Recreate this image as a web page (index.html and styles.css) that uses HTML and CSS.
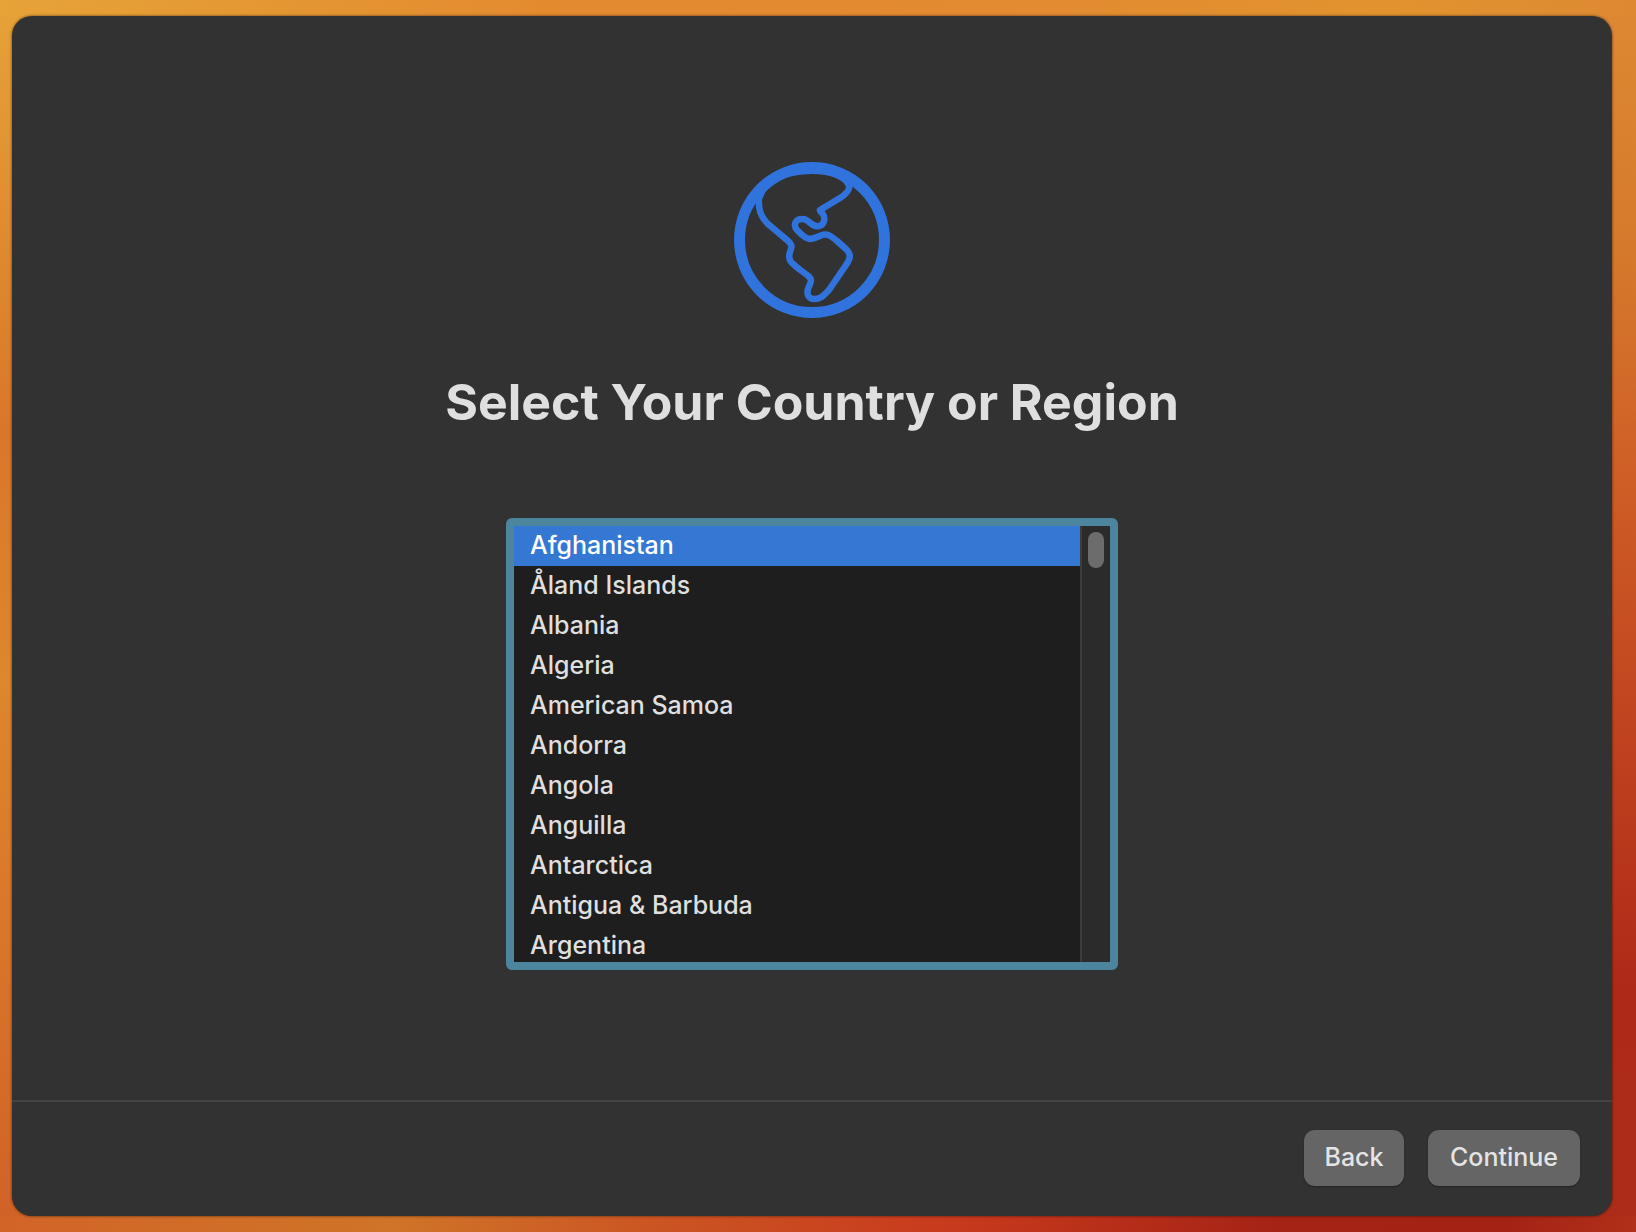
FILE: index.html
```html
<!DOCTYPE html>
<html lang="en">
<head>
<meta charset="utf-8">
<meta name="viewport" content="width=device-width, initial-scale=1">
<title>Setup Assistant</title>
<link rel="stylesheet" href="styles.css">
</head>
<body>
<form class="window">
  <main class="content">
    <svg class="globe" viewBox="0 0 156 156" fill="none" stroke="currentColor" stroke-linecap="round" stroke-linejoin="round" aria-hidden="true">
      <circle cx="78" cy="78" r="72.500" stroke-width="11"/>
      <path stroke-width="6.500" d="M25 33C24 47 26 54 34 62L53 78C60 84 57 86 56 90C53 99 59 102 65 107L73 113C80 118 76 121 74 127C72 134 76 137 80 137C87 137 90 133 95 128L112 103C117 96 117 92 112 87L103 79C97 74 93 71 88 73C83 75 80 77 76 77C70 76 67 72 63 68C59 63 61 57 68 57C75 56 77 66 85 64C92 62 91 54 88 51C84 48 86 48 91 45L106 36C114 31 117 25 115 20"/>
      <path stroke-width="6" d="M26 35C31 19 50 9 78 9C98 9 112 15 115 24"/>
    </svg>
    <h1 class="title"><label for="country">Select Your Country or Region</label></h1>
    <div class="listbox">
      <select class="countries" id="country" name="country" size="11">
        <option selected>Afghanistan</option>
        <option>Åland Islands</option>
        <option>Albania</option>
        <option>Algeria</option>
        <option>American Samoa</option>
        <option>Andorra</option>
        <option>Angola</option>
        <option>Anguilla</option>
        <option>Antarctica</option>
        <option>Antigua &amp; Barbuda</option>
        <option>Argentina</option>
      </select>
      <div class="track" aria-hidden="true"><div class="thumb"></div></div>
    </div>
  </main>
  <footer class="footer">
    <button class="button" type="button">Back</button>
    <button class="button button-wide" type="submit">Continue</button>
  </footer>
</form>
</body>
</html>
```
FILE: styles.css
```css
* {
  box-sizing: border-box;
}

body {
  margin: 0;
  min-height: 100vh;
  padding: 16px 24px 16px 12px;
  display: flex;
  font-family: Inter, "Liberation Sans", sans-serif;
  font-size: 25px;
  color: #dfdfdf;
  background:
    linear-gradient(to right, #e6a338, #e3892f 35%, #e28b31 65%, #e2932f 85%, #dd8932) top / 100% 16px no-repeat,
    linear-gradient(to right, #d26427, #cf7428 24%, #cb5523 40%, #c83a1d 58%, #a52315 78%, #a42214 92%, #b03019) bottom / 100% 16px no-repeat,
    linear-gradient(to bottom, #e6a338, #d8772a 35%, #dd872e 55%, #d8772a 75%, #d06127) left / 50% 100% no-repeat,
    linear-gradient(to bottom, #dd8932, #d57a2c 20%, #cf5f26 38%, #c0421f 60%, #ae2a18 80%, #ac2c19) right / 50% 100% no-repeat;
}

.window {
  flex: 1;
  display: flex;
  flex-direction: column;
  border-radius: 20px;
  background: #323232;
  box-shadow: 0 0 3px rgba(0, 0, 0, 0.6);
}

.content {
  flex: 1;
  display: flex;
  flex-direction: column;
  align-items: center;
  padding: 146px 24px 40px;
}

.globe {
  width: 156px;
  height: 156px;
  color: #3073dc;
}

.title {
  margin: 52px 0 84px;
  font-size: 50px;
  line-height: 64px;
  font-weight: 650;
  text-align: center;
}

.listbox {
  width: 612px;
  max-width: 100%;
  height: 452px;
  display: flex;
  border: 8px solid #4c859d;
  border-radius: 6px;
  background: #1e1e1e;
}

.countries {
  flex: 1;
  height: 100%;
  padding: 0;
  border: 0;
  border-radius: 0;
  outline: 0;
  overflow: hidden;
  font: inherit;
  color: #dfdfdf;
  background: #1e1e1e;
  color-scheme: dark;
}

.countries option {
  height: 40px;
  min-height: 40px;
  padding: 4px 16px 0;
  font-weight: 500;
}

.countries option:checked {
  background: linear-gradient(#3478d4, #3478d4);
  -webkit-text-fill-color: #ffffff;
}

.track {
  width: 30px;
  padding: 6px;
  border-left: 2px solid #3c3c3c;
  background: #2b2b2b;
}

.thumb {
  width: 16px;
  height: 36px;
  border-radius: 8px;
  background: #6c6c6c;
}

.footer {
  display: flex;
  justify-content: flex-end;
  gap: 24px;
  padding: 28px 32px 30px;
  border-top: 2px solid #444444;
}

.button {
  width: 100px;
  height: 56px;
  padding: 0 0 2px;
  border: 0;
  border-radius: 11px;
  font: inherit;
  font-weight: 500;
  color: #e4e4e4;
  background: #656565;
  box-shadow: 0 1px 2px rgba(0, 0, 0, 0.3);
}

.button-wide {
  width: 152px;
}
```
